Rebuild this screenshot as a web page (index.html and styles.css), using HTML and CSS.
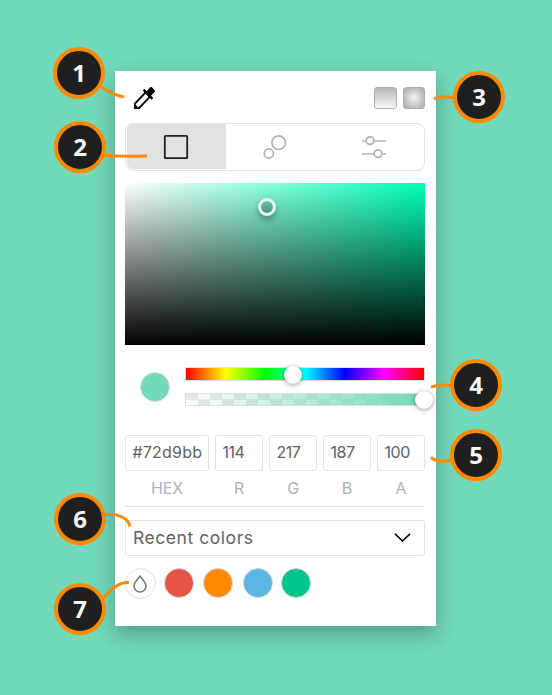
FILE: index.html
```html
<!DOCTYPE html>
<html lang="en">
<head>
<meta charset="utf-8">
<title>Color picker</title>
<link rel="stylesheet" href="styles.css">
</head>
<body>
<main class="picker">
  <header class="tools">
    <svg class="dropper" width="21" height="22" viewBox="3 3 18 18" preserveAspectRatio="none"><path d="M20.71 5.63l-2.34-2.34a1 1 0 0 0-1.41 0l-3.12 3.12-1.93-1.91-1.41 1.41 1.42 1.42L3 16.25V21h4.75l8.92-8.92 1.42 1.42 1.41-1.41-1.92-1.92 3.12-3.12c.4-.4.4-1.03.01-1.42zM6.700 19.800L4.200 17.300l8.700-8.700 2.500 2.500z"/></svg>
    <div class="gradients"><span class="grad linear"></span><span class="grad radial"></span></div>
  </header>
  <nav class="tabs">
    <div class="tab active"><svg width="26" height="26" viewBox="0 0 26 26"><rect x="1.8" y="1.8" width="22.4" height="22.4" rx=".6"/></svg></div>
    <div class="tab"><svg width="26" height="26" viewBox="0 0 26 26"><circle cx="16.7" cy="8.7" r="6.8"/><circle cx="6.8" cy="19.5" r="4.6"/></svg></div>
    <div class="tab"><svg width="26" height="26" viewBox="0 0 26 26"><path d="M1 7h4M13 7h12M1 20h12M21 20h4"/><circle cx="9" cy="6.6" r="3.8"/><circle cx="17" cy="19.6" r="3.8"/></svg></div>
  </nav>
  <div class="area"><span class="ring"></span></div>
  <section class="sliders">
    <span class="current"></span>
    <div class="tracks">
      <div class="track hue"><span class="knob mid"></span></div>
      <div class="track alpha"><span class="knob end"></span></div>
    </div>
  </section>
  <section class="fields">
    <div class="field"><div class="box hex">#72d9bb</div><div class="label">HEX</div></div>
    <div class="field"><div class="box">114</div><div class="label">R</div></div>
    <div class="field"><div class="box">217</div><div class="label">G</div></div>
    <div class="field"><div class="box">187</div><div class="label">B</div></div>
    <div class="field"><div class="box">100</div><div class="label">A</div></div>
  </section>
  <div class="select"><span>Recent colors</span><svg width="18" height="12" viewBox="0 0 18 12"><path d="M2 1.8L9.500 9l7.500-7.200"/></svg></div>
  <div class="swatches">
    <span class="swatch none"><svg width="16" height="20" viewBox="0 0 16 20"><path d="M8 2.2C6.2 4.7 2 8.6 2 12a6 6 0 0 0 12 0C14 8.6 9.8 4.7 8 2.2z"/></svg></span>
    <span class="swatch red"></span><span class="swatch orange"></span><span class="swatch blue"></span><span class="swatch green"></span>
  </div>
</main>
<svg class="pointers" width="552" height="695" viewBox="0 0 552 695">
  <path d="M99 85Q112 95 124 97M103 155.3Q126 157 147 156M434 98.5Q445 96 455 98M431 387Q441 384 452 385.5M431 457.500Q439 464 453 459.500M104 514.700C119 513 128 518 130 526.500M102 600Q117 581 129 582.700"/>
</svg>
<span class="badge b1">1</span>
<span class="badge b2">2</span>
<span class="badge b3">3</span>
<span class="badge b4">4</span>
<span class="badge b5">5</span>
<span class="badge b6">6</span>
<span class="badge b7">7</span>
</body>
</html>
```
FILE: styles.css
```css
* { box-sizing: border-box; }
body {
  margin: 0;
  height: 695px;
  padding: 71px 116px 0 115px;
  position: relative;
  overflow: hidden;
  background: #72d9bb;
  font-family: Inter, "Liberation Sans", sans-serif;
}
svg { display: block; fill: none; }
.picker {
  height: 555px;
  padding: 15px 11px 0 10px;
  background: #fff;
  box-shadow: 0 8px 20px rgba(0, 0, 0, .28);
}
.tools { display: flex; justify-content: space-between; height: 37px; padding-left: 9px; }
.dropper { fill: #000; margin-top: 1px; }
.gradients { display: flex; gap: 6px; padding-top: 1px; }
.grad { width: 22px; height: 22px; border: 1px solid #adadb0; border-radius: 3px; }
.linear { width: 23px; background: linear-gradient(#b7b7b9, #f8f8f8); }
.radial { background: radial-gradient(circle, #f5f5f5, #b5b5b7 80%); }
.tabs {
  display: flex;
  height: 48px;
  padding: 0 0 1px 1px;
  border: 1px solid #e2e2e2;
  border-radius: 8px;
}
.tab { flex: 1; display: flex; align-items: center; justify-content: center; padding-right: 2px; }
.tab svg { stroke: #b2b2b5; stroke-width: 1.7; }
.tab.active { background: #e2e2e2; border-radius: 6px 0 0 6px; }
.tab.active svg { stroke: #1f1f1f; stroke-width: 1.8; }
.area {
  position: relative;
  height: 162px;
  margin-top: 12px;
  background: linear-gradient(transparent, #000), linear-gradient(90deg, #fff, #00ffb5);
}
.ring {
  position: absolute;
  left: 133px;
  top: 15px;
  width: 18px;
  height: 18px;
  border: 3px solid #e6f5f0;
  border-radius: 50%;
  background: linear-gradient(rgba(0, 0, 0, .14), rgba(0, 0, 0, .3)) padding-box;
  box-shadow: 0 4px 6px rgba(0, 0, 0, .3);
}
.sliders { display: flex; justify-content: space-between; padding-left: 15px; margin-top: 22px; height: 68px; }
.current { width: 30px; height: 30px; margin-top: 5px; border: 1px solid #dcdcdc; border-radius: 50%; background: #72d9bb; }
.tracks { width: 240px; }
.track { position: relative; border: 1px solid #dedede; }
.hue { height: 14px; background: linear-gradient(90deg, #f00, #ff0, #0f0, #0ff, #00f, #f0f, #f00); }
.alpha {
  height: 13px;
  margin-top: 12px;
  background:
    linear-gradient(90deg, rgba(114, 217, 187, 0), #72d9bb),
    repeating-conic-gradient(#fff 0 25%, #e8e8e8 0 50%) 0 0 / 24px 11px;
}
.knob {
  position: absolute;
  width: 18px;
  height: 18px;
  border-radius: 50%;
  background: #fff;
  box-shadow: 0 1px 5px rgba(0, 0, 0, .4);
}
.mid { left: 98px; top: -2px; }
.end { right: -9px; top: -3px; }
.fields {
  display: grid;
  grid-template-columns: 84px repeat(4, 48px);
  gap: 6px;
  height: 72px;
  border-bottom: 1px solid #dedede;
}
.box {
  height: 36px;
  padding-left: 6.5px;
  border: 1px solid #e2e2e2;
  border-radius: 3px;
  color: #626266;
  font-size: 16px;
  line-height: 33px;
  letter-spacing: -.45px;
  white-space: nowrap;
}
.hex { letter-spacing: .2px; }
.label { color: #b2b2b5; font-size: 16px; line-height: 34px; text-align: center; letter-spacing: -.2px; }
.select {
  display: flex;
  align-items: center;
  justify-content: space-between;
  height: 36px;
  margin-top: 13px;
  padding: 0 13px 1px 7px;
  border: 1px solid #e2e2e2;
  border-radius: 3px;
  color: #626266;
  font-size: 17.5px;
  letter-spacing: .55px;
}
.select svg { stroke: #000; stroke-width: 1.6; }
.swatches { display: flex; margin-top: 12px; }
.swatch { width: 30px; height: 30px; border: 1px solid #d5d5d5; border-radius: 50%; }
.none { width: 31px; height: 31px; border-color: #e2e2e2; display: flex; align-items: center; justify-content: center; padding-right: 1px; }
.none svg { stroke: #777a82; stroke-width: 1.6; }
.red { margin-left: 8px; background: #e65347; }
.orange { margin-left: 9px; background: #ff8a00; }
.blue { margin-left: 10px; background: #5ab6e2; }
.green { margin-left: 8px; background: #00c58c; }
.pointers { position: absolute; left: 0; top: 0; stroke: #ff8a00; stroke-width: 3; }
.badge {
  position: absolute;
  width: 52px;
  height: 52px;
  border: 4px solid #ff8a00;
  border-radius: 50%;
  background: #1f1f1f;
  color: #f7f7f7;
  font: 700 24px/43px "Open Sans", "Noto Sans", sans-serif;
  text-align: center;
}
.b1 { left: 53px; top: 47px; }
.b2 { left: 54px; top: 121px; }
.b3 { left: 453px; top: 71px; }
.b4 { left: 450px; top: 359px; }
.b5 { left: 450px; top: 429px; }
.b6 { left: 54px; top: 493px; }
.b7 { left: 54px; top: 583px; }
```
